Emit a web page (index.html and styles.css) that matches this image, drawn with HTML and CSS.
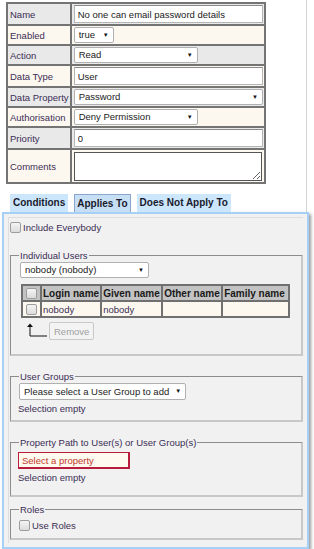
FILE: index.html
```html
<!doctype html>
<html>
<head>
<meta charset="utf-8">
<title>Permission</title>
<link rel="stylesheet" href="styles.css">
</head>
<body>
<div class="page">
  <div class="head">
    <!-- main details -->
    <table class="details">
        <tr class="odd">
            <td class="lbl">Name</td>
            <td><input type="text" class="full" value="No one can email password details"></td>
        </tr>
        <tr class="even">
            <td class="lbl">Enabled</td>
            <td><div class="sel sel-small">true<span class="arr">&#9660;</span></div></td>
        </tr>
        <tr class="odd">
            <td class="lbl">Action</td>
            <td><div class="sel sel-mid">Read<span class="arr">&#9660;</span></div></td>
        </tr>
        <tr class="even">
            <td class="lbl">Data Type</td>
            <td><input type="text" class="full" value="User"></td>
        </tr>
        <tr class="odd">
            <td class="lbl">Data Property</td>
            <td><div class="sel sel-full">Password<span class="arr">&#9660;</span></div></td>
        </tr>
        <tr class="even">
            <td class="lbl">Authorisation</td>
            <td><div class="sel sel-mid">Deny Permission<span class="arr">&#9660;</span></div></td>
        </tr>
        <tr class="odd">
            <td class="lbl">Priority</td>
            <td><input type="text" class="full" value="0"></td>
        </tr>
        <tr class="even">
            <td class="lbl lbl-tall">Comments</td>
            <td><textarea class="comments"></textarea></td>
        </tr>
    </table>

    <!-- tabs -->
    <div class="tabs">
        <span class="tab">Conditions</span>
        <span class="tab active">Applies To</span>
        <span class="tab">Does Not Apply To</span>
    </div>
  </div>
    <div class="panel">
        <div class="inner">
            <label class="chk"><span class="box"></span>Include Everybody</label>

            <fieldset class="users">
                <legend>Individual Users</legend>
                <div class="sel sel-users">nobody (nobody)<span class="arr">&#9660;</span></div>
                <table class="grid">
                    <tr>
                        <th class="c"><span class="box"></span></th>
                        <th>Login name</th>
                        <th>Given name</th>
                        <th>Other name</th>
                        <th>Family name</th>
                    </tr>
                    <tr>
                        <td class="c"><span class="box"></span></td>
                        <td>nobody</td>
                        <td>nobody</td>
                        <td></td>
                        <td></td>
                    </tr>
                </table>
                <div class="actions">
                    <svg class="back" width="22" height="14" viewBox="0 0 22 14">
                        <path d="M4 13 L21 13 M4 13 L4 2" stroke="#111" stroke-width="1" fill="none"/>
                        <path d="M1 4 L4 0.5 L7 4 Z" fill="#111"/>
                    </svg>
                    <button class="btn" disabled>Remove</button>
                </div>
            </fieldset>

            <fieldset class="groups">
                <legend>User Groups</legend>
                <div class="sel sel-groups">Please select a User Group to add<span class="arr">&#9660;</span></div>
                <div class="empty">Selection empty</div>
            </fieldset>

            <fieldset class="path">
                <legend>Property Path to User(s) or User Group(s)</legend>
                <div class="prop">Select a property</div>
                <div class="empty">Selection empty</div>
            </fieldset>

            <fieldset class="roles">
                <legend>Roles</legend>
                <label class="chk"><span class="box"></span>Use Roles</label>
            </fieldset>
        </div>
    </div>
</div>
</body>
</html>
```
FILE: styles.css
```css
body{
    margin: 0;
    background: #ffffff;
    font-family: "Liberation Sans", Arial, sans-serif;
    font-size: 9.5px;
    color: #3b2d55;
}

.page{
    padding: 0 0 0 2px;
}
/* top part with a thin frame line on the right */
.head{
    width: 304px;
    padding-top: 2px;
    border-right: 1px solid #d2d2d2;
}

/* main details table */
.details{
    margin-left: 4px;
    width: 260px;
    border-collapse: collapse;
    border: 2px solid #6e6e6e;
}
.details td{
    border: 2px solid #747474;
    padding: 1px 1px 1px 2px;
    height: 16px;
}
.details .lbl{
    width: 56px;
    padding-left: 2px;
    white-space: nowrap;
}
.details .lbl-tall{
    height: 30px;
}
.odd td{
    background: #e9e9e9;
}
.even td{
    background: #fdf8ef;
}

input.full{
    box-sizing: border-box;
    display: block;
    width: 100%;
    height: 18px;
    margin: 0;
    padding: 0 3px;
    border: 1px solid #b5b5b5;
    border-top-color: #8a8a8a;
    background: #fff;
    font-family: inherit;
    font-size: 9.5px;
    color: #222;
}
textarea.comments{
    box-sizing: border-box;
    display: block;
    width: 188px;
    height: 29px;
    margin: 0;
    border: 1px solid #555;
    background: #fff;
}

/* fake select boxes */
.sel{
    box-sizing: border-box;
    position: relative;
    height: 16px;
    line-height: 14px;
    padding: 0 16px 0 4px;
    border: 1px solid #b0b0b0;
    border-radius: 2px;
    background: #fff;
    color: #222;
    white-space: nowrap;
}
.sel .arr{
    position: absolute;
    right: 4px;
    top: 0;
    font-size: 6px;
    color: #111;
}
.sel-small{
    width: 40px;
}
.sel-mid{
    width: 124px;
}
.sel-full{
    width: 100%;
}
.sel-users{
    width: 129px;
    margin-left: 2px;
}
.sel-groups{
    display: inline-block;
    margin-left: 1px;
    height: 17px;
    line-height: 15px;
}

/* tabs */
.tabs{
    display: flex;
    gap: 6px;
    margin: 10px 0 0 8px;
}
.tab{
    box-sizing: border-box;
    height: 18px;
    line-height: 17px;
    padding: 0 3px;
    background: #cce6fb;
    font-weight: bold;
    font-size: 10px;
    color: #1a1a2e;
}
.tab.active{
    border: 1px solid #8aa6cc;
    border-bottom: none;
    background: #c7dff5;
    padding: 0 2px;
}

.panel{
    width: 307px;
    border: 2px solid #a6d0f6;
    background: #f1f1f1;
    padding: 3px 4px 4px 4px;
    box-sizing: border-box;
    box-shadow: 2px 2px 3px #9a9a9a;
}
.inner{
    border: 1px solid #dedede;
    border-right: none;
    border-bottom: none;
    padding: 4px 0 3px 1px;
}

.chk{
    display: flex;
    align-items: center;
    gap: 2px;
}
.box{
    display: inline-block;
    box-sizing: border-box;
    width: 11px;
    height: 11px;
    border: 1px solid #9d9d9d;
    border-radius: 2px;
    background: linear-gradient(#f4f4f4, #dcdcdc);
}

fieldset{
    margin: 12px 0 0 0;
    padding: 1px 6px 6px 7px;
    border-color: #8c8c8c #c8c8c8 #c8c8c8 #8c8c8c;
    border-style: solid;
    border-width: 1px 2px 2px 1px;
}
fieldset legend{
    padding: 0 1px;
    margin-left: 1px;
}
.users{
    margin-top: 17px;
    padding-bottom: 14px;
}

/* users grid */
.grid{
    margin: 6px 0 0 3px;
    border-collapse: collapse;
    border: 2px solid #707070;
}
.grid th, .grid td{
    border: 2px solid #707070;
    height: 14px;
    padding: 0 1px;
    text-align: left;
    color: #1a1a1a;
    white-space: nowrap;
}
.grid th{
    background: #c3c3c3;
    font-weight: bold;
    font-size: 10px;
}
.grid td{
    background: #fdf8ef;
    color: #3b2d55;
}
.grid th:nth-child(2){ width: 55px; }
.grid th:nth-child(3){ width: 57px; }
.grid th:nth-child(4){ width: 56px; }
.grid th:nth-child(5){ width: 63px; }
.grid .c{
    width: 15px;
    text-align: center;
}
.grid th .box, .grid td .box{
    vertical-align: middle;
}

.actions{
    display: flex;
    align-items: flex-end;
    gap: 1px;
    margin: 4px 0 0 8px;
}
.back{
    margin-bottom: 3px;
}
.btn{
    height: 18px;
    padding: 0 4px;
    border: 1px solid #c9c9c9;
    border-radius: 2px;
    background: #f3f3f3;
    font-family: inherit;
    font-size: 9.5px;
    color: #a0a0a0;
}

.empty{
    margin-top: 3px;
}
.groups{
    margin-top: 15px;
}
.path{
    margin-top: 15px;
    padding-bottom: 12px;
}
.prop{
    box-sizing: border-box;
    width: 112px;
    height: 17px;
    line-height: 15px;
    margin-top: 3px;
    padding-left: 3px;
    border: 2px solid #b81e3b;
    border-width: 1px 2px 2px 1px;
    background: #fffaf0;
    color: #c0392b;
}
.roles{
    margin-top: 7px;
    padding-bottom: 7px;
}
.roles .chk{
    margin: 4px 0 0 1px;
}
```
